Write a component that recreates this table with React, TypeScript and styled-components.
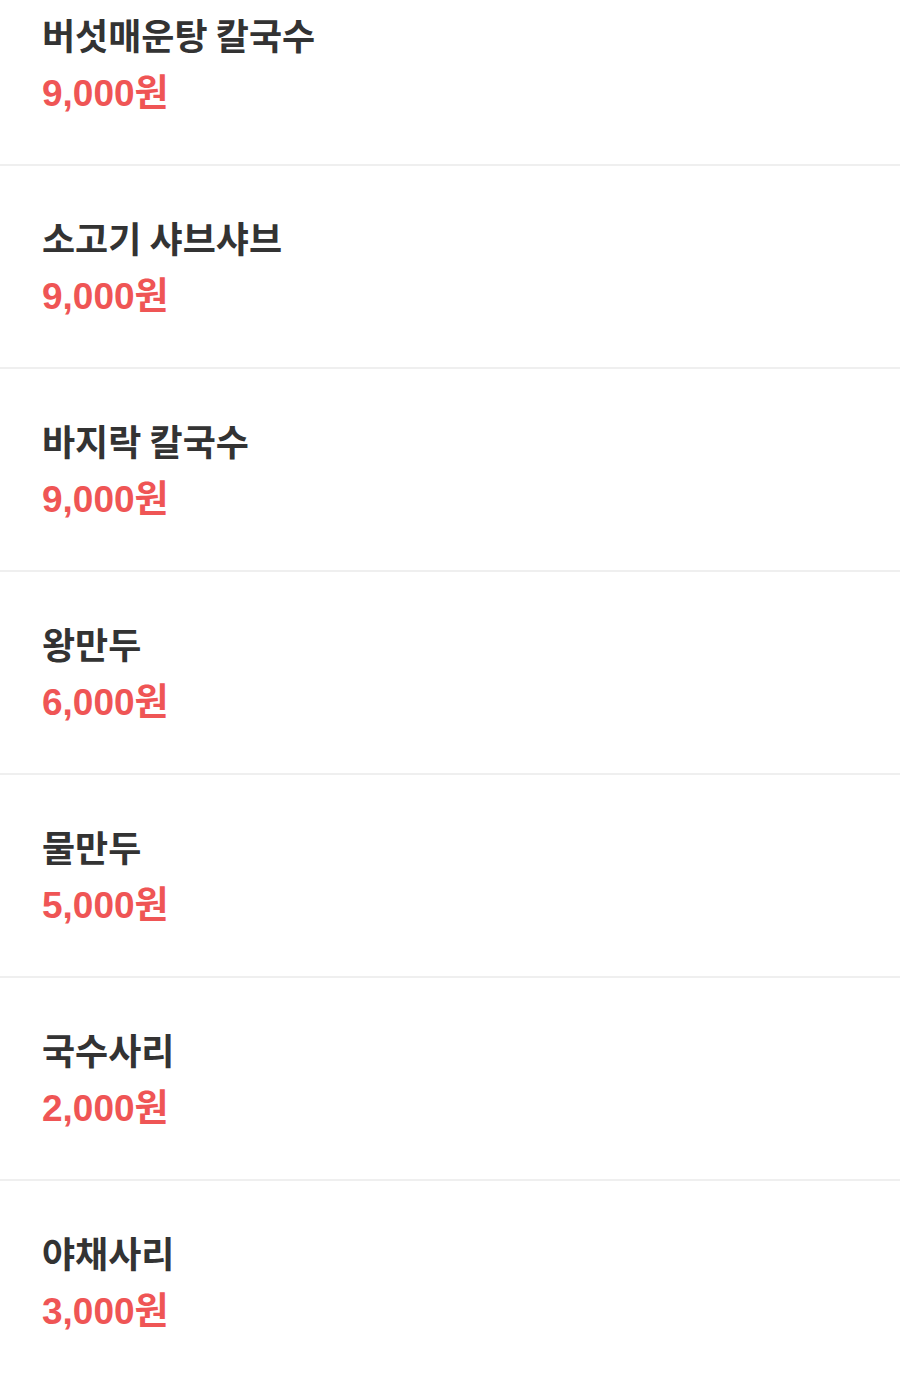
import React from "react";
import styled, { createGlobalStyle } from "styled-components";

const Global = createGlobalStyle`
  html, body { margin: 0; padding: 0; background: #fff; }
  body { font-family: "Noto Sans CJK KR", "Noto Sans", sans-serif; }
`;

const List = styled.ul`
  list-style: none;
  margin: -37px 0 0 0;
  padding: 0;
`;

const Item = styled.li`
  height: 201px;
  box-sizing: content-box;
  padding: 0 42px;
  display: flex;
  flex-direction: column;
  justify-content: center;
  gap: 10px;
  border-bottom: 2px solid #efefef;
  &:last-child { border-bottom: none; }
`;

const Name = styled.div`
  font-size: 36px;
  font-weight: 700;
  color: #333333;
  line-height: 50px;
`;

const Price = styled.div`
  font-family: "Liberation Sans", "Noto Sans CJK KR", sans-serif;
  font-size: 37px;
  font-weight: 700;
  color: #ef5555;
  line-height: 50px;
`;

const menu = [
  { name: "버섯매운탕 칼국수", price: "9,000원" },
  { name: "소고기 샤브샤브", price: "9,000원" },
  { name: "바지락 칼국수", price: "9,000원" },
  { name: "왕만두", price: "6,000원" },
  { name: "물만두", price: "5,000원" },
  { name: "국수사리", price: "2,000원" },
  { name: "야채사리", price: "3,000원" },
];

export default function App() {
  return (
    <>
      <Global />
      <List>
        {menu.map((m) => (
          <Item key={m.name}>
            <Name>{m.name}</Name>
            <Price>{m.price}</Price>
          </Item>
        ))}
      </List>
    </>
  );
}
